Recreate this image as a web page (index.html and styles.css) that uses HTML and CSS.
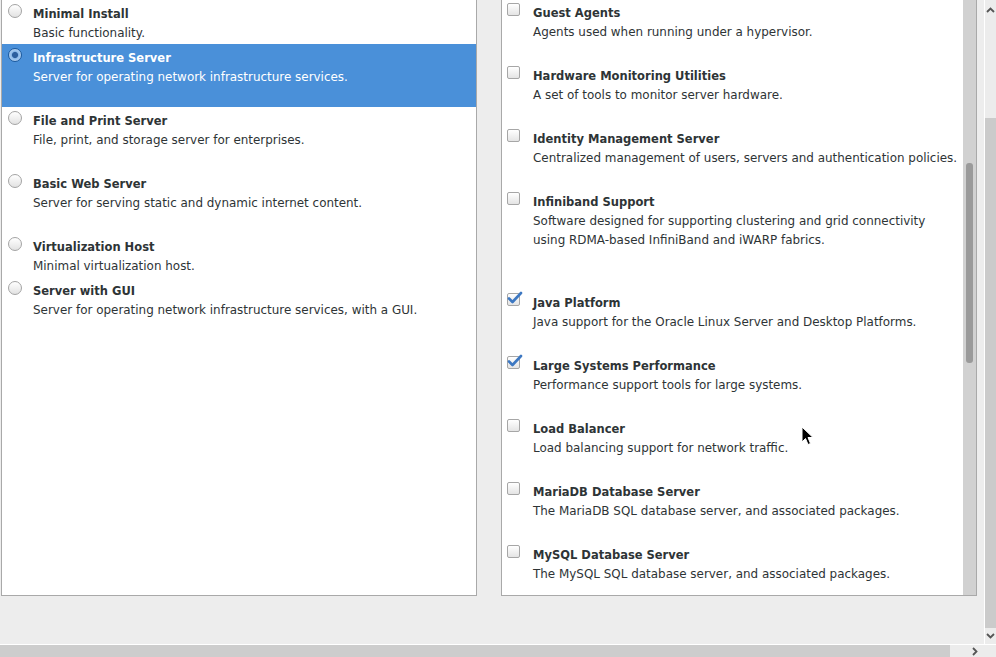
FILE: index.html
```html
<!DOCTYPE html>
<html>
<head>
<meta charset="utf-8">
<link rel="stylesheet" href="styles.css">
</head>
<body>
<div class="screen">
  <div class="content">
    <div class="pane">
      <div class="list">
        <div class="row">
          <span class="radio"></span>
          <div class="text"><div class="title">Minimal Install</div><div class="desc">Basic functionality.</div></div>
        </div>
        <div class="row spaced selected">
          <span class="radio on"></span>
          <div class="text"><div class="title">Infrastructure Server</div><div class="desc">Server for operating network infrastructure services.</div></div>
        </div>
        <div class="row spaced">
          <span class="radio"></span>
          <div class="text"><div class="title">File and Print Server</div><div class="desc">File, print, and storage server for enterprises.</div></div>
        </div>
        <div class="row spaced">
          <span class="radio"></span>
          <div class="text"><div class="title">Basic Web Server</div><div class="desc">Server for serving static and dynamic internet content.</div></div>
        </div>
        <div class="row">
          <span class="radio"></span>
          <div class="text"><div class="title">Virtualization Host</div><div class="desc">Minimal virtualization host.</div></div>
        </div>
        <div class="row">
          <span class="radio"></span>
          <div class="text"><div class="title">Server with GUI</div><div class="desc">Server for operating network infrastructure services, with a GUI.</div></div>
        </div>
      </div>
    </div>
    <div class="pane pane-scroll">
      <div class="list list-right">
        <div class="row crow spaced">
          <span class="check"></span>
          <div class="text"><div class="title">Guest Agents</div><div class="desc">Agents used when running under a hypervisor.</div></div>
        </div>
        <div class="row crow spaced">
          <span class="check"></span>
          <div class="text"><div class="title">Hardware Monitoring Utilities</div><div class="desc">A set of tools to monitor server hardware.</div></div>
        </div>
        <div class="row crow spaced">
          <span class="check"></span>
          <div class="text"><div class="title">Identity Management Server</div><div class="desc">Centralized management of users, servers and authentication policies.</div></div>
        </div>
        <div class="row crow spaced2">
          <span class="check"></span>
          <div class="text"><div class="title">Infiniband Support</div><div class="desc">Software designed for supporting clustering and grid connectivity<br>using RDMA-based InfiniBand and iWARP fabrics.</div></div>
        </div>
        <div class="row crow spaced">
          <span class="check on"><svg class="tick" width="16" height="14" viewBox="0 0 16 14"><path d="M2 7.5 L5.5 11 L14 2" fill="none" stroke="#3d78c2" stroke-width="2.6" stroke-linecap="round" stroke-linejoin="round"/></svg></span>
          <div class="text"><div class="title">Java Platform</div><div class="desc">Java support for the Oracle Linux Server and Desktop Platforms.</div></div>
        </div>
        <div class="row crow spaced">
          <span class="check on"><svg class="tick" width="16" height="14" viewBox="0 0 16 14"><path d="M2 7.5 L5.5 11 L14 2" fill="none" stroke="#3d78c2" stroke-width="2.6" stroke-linecap="round" stroke-linejoin="round"/></svg></span>
          <div class="text"><div class="title">Large Systems Performance</div><div class="desc">Performance support tools for large systems.</div></div>
        </div>
        <div class="row crow spaced">
          <span class="check"></span>
          <div class="text"><div class="title">Load Balancer</div><div class="desc">Load balancing support for network traffic.</div></div>
        </div>
        <div class="row crow spaced">
          <span class="check"></span>
          <div class="text"><div class="title">MariaDB Database Server</div><div class="desc">The MariaDB SQL database server, and associated packages.</div></div>
        </div>
        <div class="row crow spaced">
          <span class="check"></span>
          <div class="text"><div class="title">MySQL Database Server</div><div class="desc">The MySQL SQL database server, and associated packages.</div></div>
        </div>
      </div>
      <div class="track"><div class="track-thumb"></div></div>
    </div>
  </div>
  <div class="vscroll">
    <div class="vbtn vbtn-top"><svg width="9" height="6" viewBox="0 0 9 6"><path d="M1 5 L4.5 1.5 L8 5" fill="none" stroke="#555" stroke-width="1.8"/></svg></div>
    <div class="vtrough"><div class="vthumb"></div></div>
    <div class="vbtn vbtn-bottom"><svg width="9" height="6" viewBox="0 0 9 6"><path d="M1 1 L4.5 4.5 L8 1" fill="none" stroke="#555" stroke-width="1.8"/></svg></div>
  </div>
</div>
<div class="hscroll">
  <div class="hthumb"></div>
  <div class="hbtn"><svg width="6" height="9" viewBox="0 0 6 9"><path d="M1 1 L4.5 4.5 L1 8" fill="none" stroke="#555" stroke-width="1.8"/></svg></div>
  <div class="corner"></div>
</div>
<svg class="cursor" width="14" height="20" viewBox="0 0 14 20"><path d="M1 1 L1 16 L4.5 12.5 L7 18.5 L9.5 17.5 L7 11.5 L12 11.5 Z" fill="#000" stroke="#fff" stroke-width="1"/></svg>
</body>
</html>
```
FILE: styles.css
```css
html, body {
  margin: 0;
  padding: 0;
}
body {
  width: 996px;
  height: 657px;
  overflow: hidden;
  position: relative;
  background: #ededed;
  font-family: "DejaVu Sans", "Liberation Sans", sans-serif;
  font-size: 12px;
  color: #2e3436;
}
.screen {
  display: flex;
  height: 644px;
}
.content {
  width: 984px;
  box-sizing: border-box;
  padding-left: 1px;
  display: flex;
  gap: 24px;
  align-items: flex-start;
}
.pane {
  width: 476px;
  height: 596px;
  box-sizing: border-box;
  background: #fff;
  border: 1px solid #a9a9a9;
  border-top: none;
  overflow: hidden;
}
.pane-scroll {
  display: flex;
}
.list {
  flex: 1;
  min-width: 0;
}
.list-right {
  margin-top: -1px;
}
.row {
  display: flex;
  padding: 5px 0 1px;
  line-height: 19px;
}
.row.spaced {
  padding-bottom: 20px;
}
.row.spaced2 {
  padding-bottom: 39px;
}
.row.selected {
  background: #4a90d9;
  color: #fff;
}
.title {
  font-weight: bold;
  font-size: 11.5px;
}
.desc {
  white-space: nowrap;
  font-size: 11.95px;
}
.radio {
  flex: none;
  width: 14px;
  height: 14px;
  box-sizing: border-box;
  margin: -1px 11px 0 6px;
  border-radius: 50%;
  border: 1px solid #a4a4a4;
  background: linear-gradient(#ffffff, #e2e2e2);
}
.radio.on {
  border-color: #1d5a9e;
  background: radial-gradient(circle, #2c5f9e 0 2.6px, #8dbbea 3.6px, #cfe2f7 100%);
}
.check {
  flex: none;
  position: relative;
  width: 13px;
  height: 13px;
  box-sizing: border-box;
  margin: -1px 13px 0 5px;
  border-radius: 2px;
  border: 1px solid #a6a6a6;
  background: linear-gradient(#ffffff, #e4e4e4);
}
.tick {
  position: absolute;
  left: -1px;
  top: -3px;
}
.track {
  flex: none;
  width: 13px;
  align-self: stretch;
  background: #d1d1d1;
}
.track-thumb {
  margin: 163px 0 0 3px;
  width: 7px;
  height: 200px;
  border-radius: 3px;
  background: #9a9a9a;
}
.vscroll {
  width: 11px;
  border-left: 1px solid #fff;
  display: flex;
  flex-direction: column;
  background: #ececec;
}
.vbtn {
  display: flex;
  justify-content: center;
}
.vbtn-top {
  height: 18px;
  align-items: flex-start;
  padding-top: 7px;
  box-sizing: border-box;
}
.vbtn-bottom {
  height: 16px;
  align-items: center;
}
.vtrough {
  flex: 1;
}
.vthumb {
  margin-top: 100px;
  height: 510px;
  background: #cbcbcb;
}
.hscroll {
  height: 12px;
  border-top: 1px solid #fff;
  display: flex;
  background: #ececec;
}
.hthumb {
  width: 950px;
  background: #cdcdcd;
}
.hbtn {
  flex: 1;
  display: flex;
  align-items: center;
  justify-content: flex-end;
  padding-right: 6px;
}
.corner {
  width: 12px;
}
.cursor {
  position: absolute;
  left: 801px;
  top: 426px;
}
```
